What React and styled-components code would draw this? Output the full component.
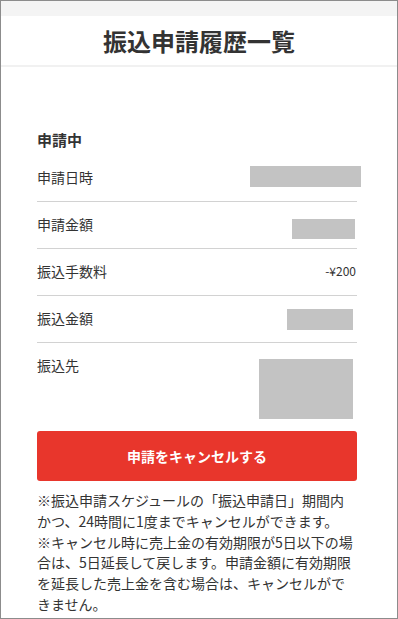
import React from 'react';
import styled, { createGlobalStyle } from 'styled-components';

const Global = createGlobalStyle`
  html, body { margin: 0; padding: 0; background: #fff; }
  body { font-family: "Noto Sans CJK JP", "Noto Sans", sans-serif; color: #333; }
`;

const Frame = styled.div`
  box-sizing: border-box;
  width: 398px;
  height: 619px;
  border: 1px solid #8c8c8c;
  overflow: hidden;
  background: #fff;
`;

const TopStrip = styled.div`
  height: 15px;
  background: #f4f4f4;
`;

const Header = styled.header`
  height: 49px;
  border-bottom: 2px solid #f1f1f1;
  display: flex;
  align-items: center;
  justify-content: center;
`;

const Title = styled.h1`
  margin: 0;
  font-size: 24px;
  font-weight: 700;
  color: #333;
  line-height: 1;
`;

const Content = styled.main`
  padding: 62px 40px 0 36px;
`;

const SectionTitle = styled.h2`
  margin: 0 0 5px;
  font-size: 15px;
  font-weight: 700;
  line-height: 21px;
  color: #333;
`;

const Row = styled.div`
  box-sizing: border-box;
  height: ${p => (p.$last ? 'auto' : '47px')};
  padding: 12px 0 ${p => (p.$last ? '12px' : '0')};
  border-bottom: ${p => (p.$last ? 'none' : '1px solid #d2d2d2')};
  display: flex;
  justify-content: space-between;
  align-items: flex-start;
`;

const Label = styled.span`
  font-size: 14px;
  line-height: 20px;
  color: #333;
`;

const Value = styled.span`
  font-size: 12px;
  line-height: 20px;
  color: #333;
  margin-right: 1px;
`;

const Masked = styled.div`
  width: ${p => p.$w}px;
  height: ${p => p.$h}px;
  margin-top: ${p => p.$top}px;
  margin-right: ${p => p.$right}px;
  background: #c3c3c3;
`;

const CancelButton = styled.button`
  display: block;
  width: 100%;
  height: 50px;
  border: none;
  border-radius: 3px;
  background: #e8362c;
  color: #fff;
  font-family: inherit;
  font-size: 14px;
  font-weight: 700;
  cursor: pointer;
`;

const Notes = styled.p`
  margin: 9px 0 0;
  font-size: 14px;
  line-height: 20.8px;
  color: #333;
  white-space: nowrap;
`;

const rows = [
  { label: '申請日時', mask: { w: 111, h: 21, top: -1, right: -4 } },
  { label: '申請金額', mask: { w: 63, h: 20, top: 5, right: 2 } },
  { label: '振込手数料', value: '-¥200' },
  { label: '振込金額', mask: { w: 66, h: 21, top: 1, right: 4 } },
  { label: '振込先', mask: { w: 94, h: 60, top: 4, right: 4 }, last: true },
];

export default function App() {
  return (
    <Frame>
      <Global />
      <TopStrip />
      <Header>
        <Title>振込申請履歴一覧</Title>
      </Header>
      <Content>
        <SectionTitle>申請中</SectionTitle>
        {rows.map(r => (
          <Row key={r.label} $last={r.last}>
            <Label>{r.label}</Label>
            {r.value ? (
              <Value>{r.value}</Value>
            ) : (
              <Masked $w={r.mask.w} $h={r.mask.h} $top={r.mask.top} $right={r.mask.right} />
            )}
          </Row>
        ))}
        <CancelButton>申請をキャンセルする</CancelButton>
        <Notes>
          ※振込申請スケジュールの「振込申請日」期間内<br />
          かつ、24時間に1度までキャンセルができます。<br />
          ※キャンセル時に売上金の有効期限が5日以下の場<br />
          合は、5日延長して戻します。申請金額に有効期限<br />
          を延長した売上金を含む場合は、キャンセルがで<br />
          きません。
        </Notes>
      </Content>
    </Frame>
  );
}
